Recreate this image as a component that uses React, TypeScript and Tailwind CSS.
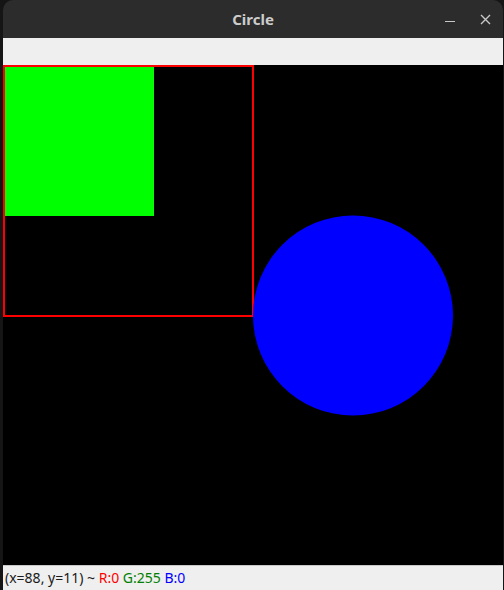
import React from 'react';

const App: React.FC = () => {
  return (
    <div className="w-[504px] h-[590px] bg-[#151515] flex flex-col pl-[3px] pr-[1px] overflow-hidden" style={{ fontFamily: '"Noto Sans", "DejaVu Sans", sans-serif' }}>
      {/* title bar */}
      <div className="h-[38px] bg-[#2c2c2c] rounded-t-[10px] flex items-center relative shrink-0">
        <div className="flex-1 text-center text-[15px] font-bold text-[#cccccc]">
          Circle
        </div>
        <div className="absolute right-[12px] top-0 h-full flex items-center gap-[25px]">
          <div className="w-[10px] h-[1.5px] bg-[#c8c8c8] mt-[5px]" />
          <svg width="11" height="11" viewBox="0 0 11 11">
            <path d="M1 1 L10 10 M10 1 L1 10" stroke="#c8c8c8" strokeWidth="1.4" />
          </svg>
        </div>
      </div>

      {/* toolbar */}
      <div className="h-[27px] bg-[#efefef] shrink-0" />

      {/* image */}
      <div className="h-[500px] w-[500px] bg-black shrink-0">
        <svg width="500" height="500" viewBox="0 0 500 500" shapeRendering="crispEdges">
          <rect x="0" y="0" width="151" height="151" fill="#00ff00" />
          <rect x="0" y="0" width="251" height="2" fill="#ff0000" />
          <rect x="0" y="0" width="2" height="251" fill="#ff0000" />
          <rect x="249" y="0" width="2" height="251" fill="#ff0000" />
          <rect x="0" y="250" width="251" height="2" fill="#ff0000" />
          <circle cx="350" cy="250.5" r="100" fill="#0000ff" shapeRendering="auto" />
        </svg>
      </div>

      {/* status bar */}
      <div className="flex-1 bg-[#efefef] border-t border-[#c8c8c8] flex items-center px-[2px] text-[14px] text-[#1a1a1a] leading-none">
        <span>(x=88, y=11) ~&nbsp;</span>
        <span className="text-[#ff0000]">R:0&nbsp;</span>
        <span className="text-[#008000]">G:255&nbsp;</span>
        <span className="text-[#0000ff]">B:0</span>
      </div>
    </div>
  );
};

export default App;
